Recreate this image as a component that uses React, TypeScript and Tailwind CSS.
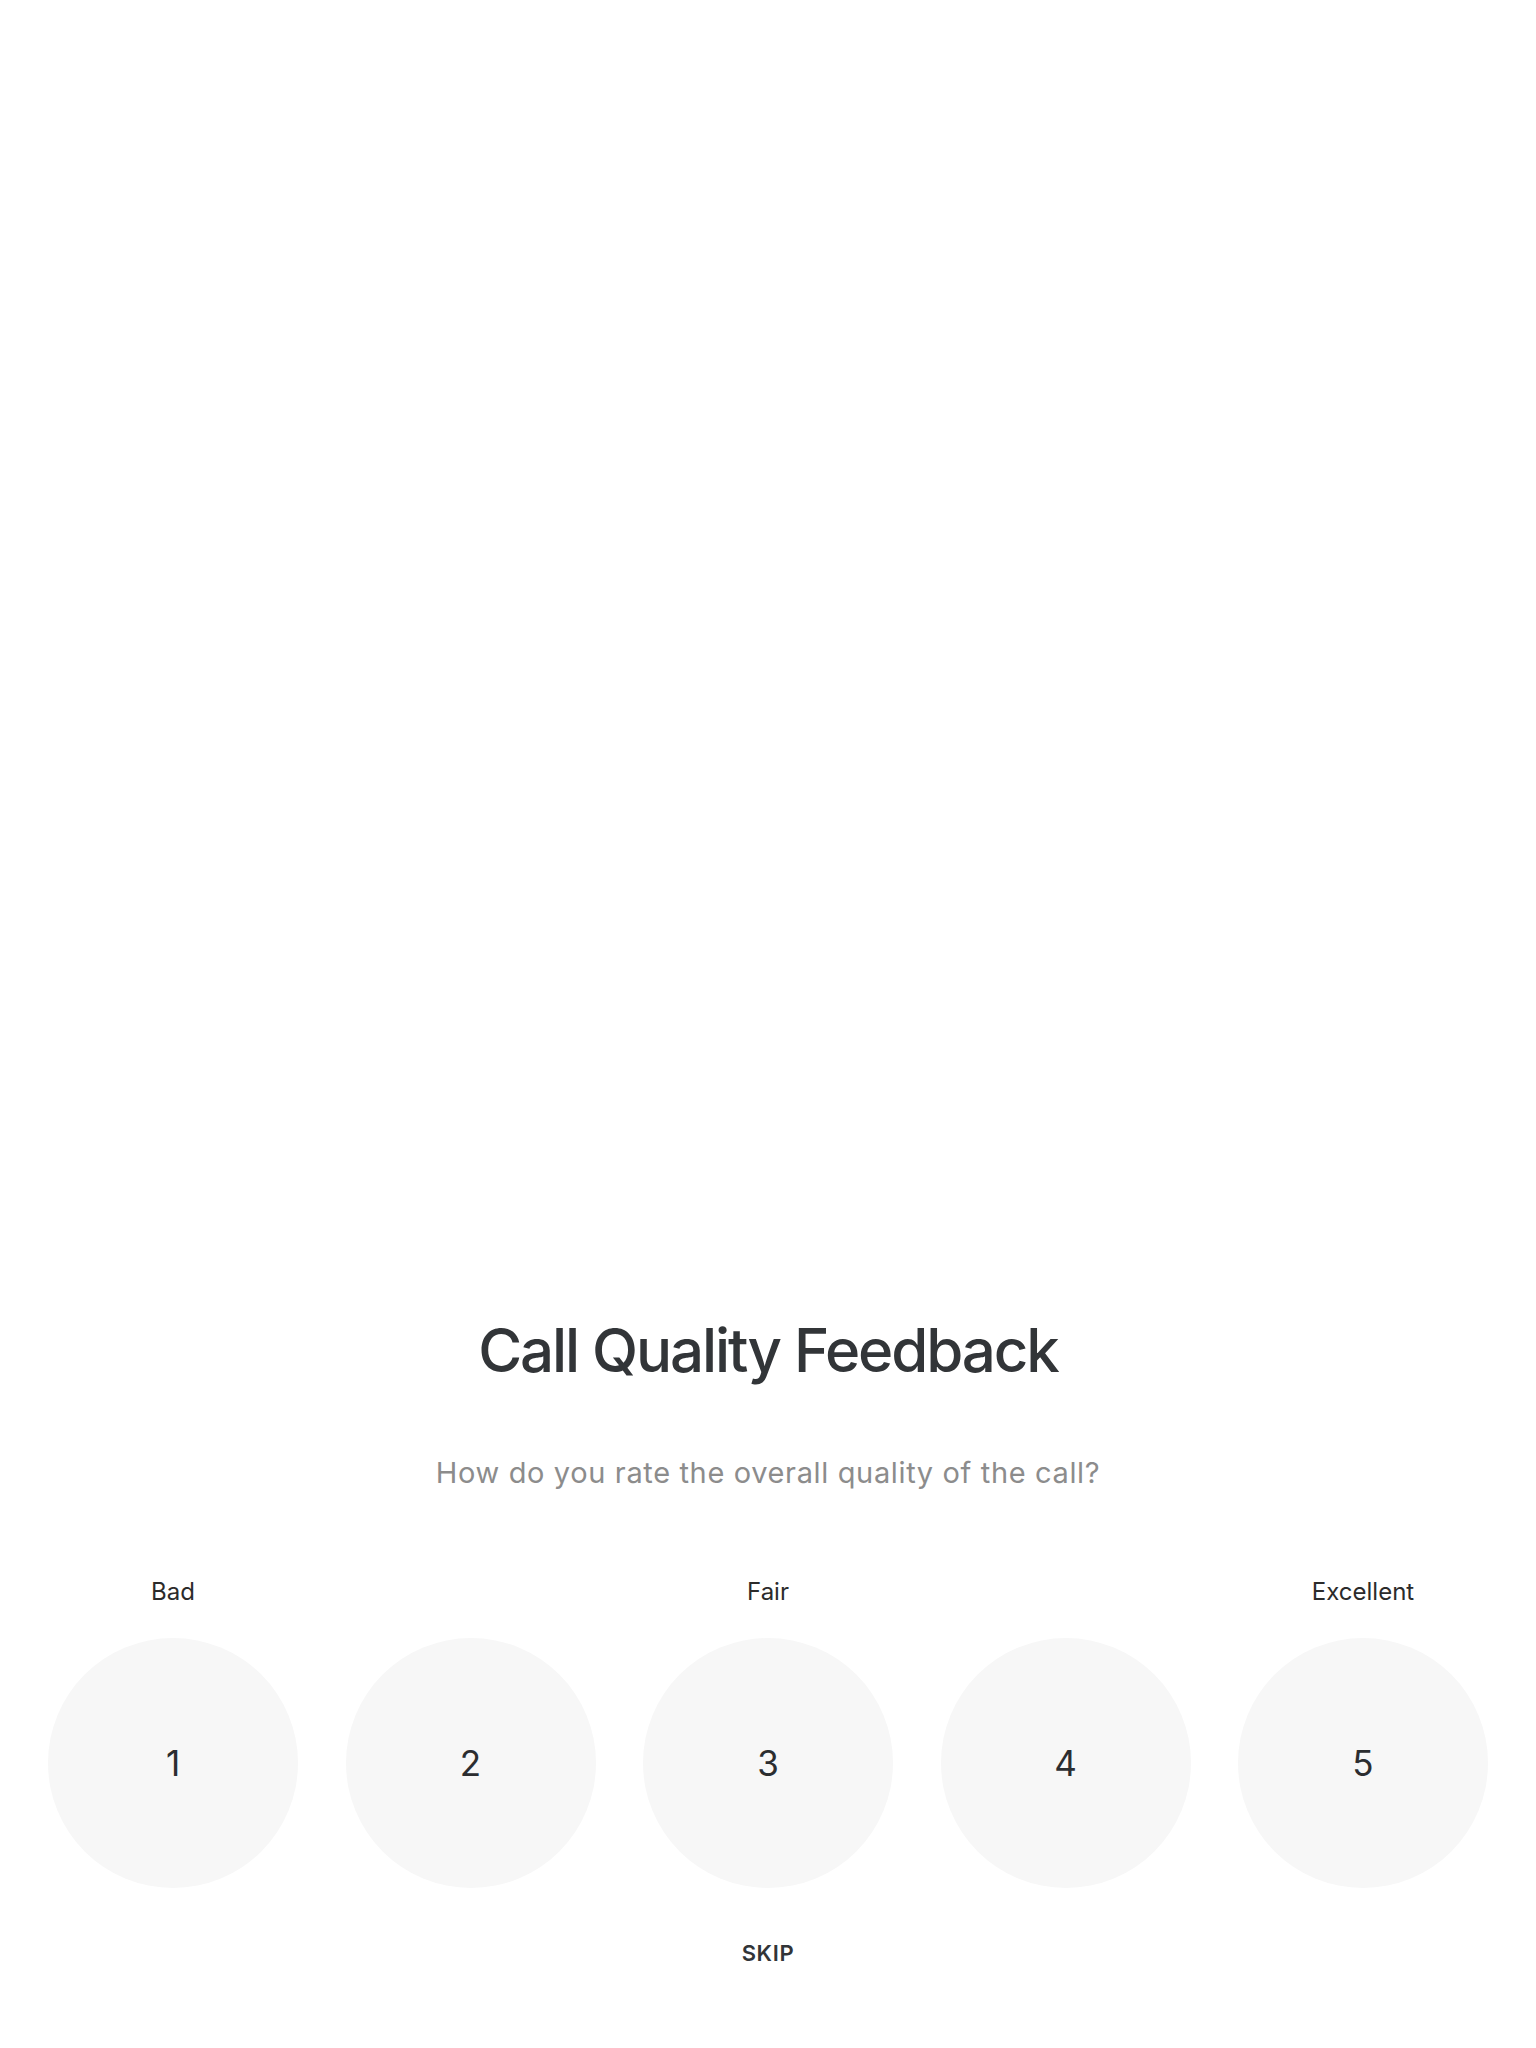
import { useState } from 'react';

const ratings = [
  { value: 1, label: 'Bad' },
  { value: 2, label: '' },
  { value: 3, label: 'Fair' },
  { value: 4, label: '' },
  { value: 5, label: 'Excellent' },
];

export default function App() {
  const [selected, setSelected] = useState<number | null>(null);

  return (
    <div className="flex h-[2048px] flex-col justify-end bg-white pb-[81px] font-['Inter',sans-serif]">
      <h1 className="text-center text-[60px] leading-[72px] font-medium tracking-[-0.035em] text-[#323538]">Call Quality Feedback</h1>
      <p className="mt-[69px] text-center text-[29px] leading-[36px] tracking-[0.022em] text-[#8c8c8c]">How do you rate the overall quality of the call?</p>

      <div className="mt-[86px] flex justify-between px-[48px]">
        {ratings.map((r) => (
          <div key={r.value} className="flex w-[250px] flex-col items-center">
            <span className="h-[30px] text-[24px] leading-[30px] text-[#2b2b2b]">{r.label}</span>
            <button
              onClick={() => setSelected(r.value)}
              className={`mt-[31px] flex h-[250px] w-[250px] items-center justify-center rounded-full text-[35px] text-[#2b2d30] ${selected === r.value ? 'bg-[#ececec]' : 'bg-[#f7f7f7]'}`}>
              {r.value}
            </button>
          </div>
        ))}
      </div>

      <button className="mx-auto mt-[51px] text-[22px] leading-[28px] font-semibold tracking-[0.03em] text-[#323538]">SKIP</button>
    </div>
  );
}
